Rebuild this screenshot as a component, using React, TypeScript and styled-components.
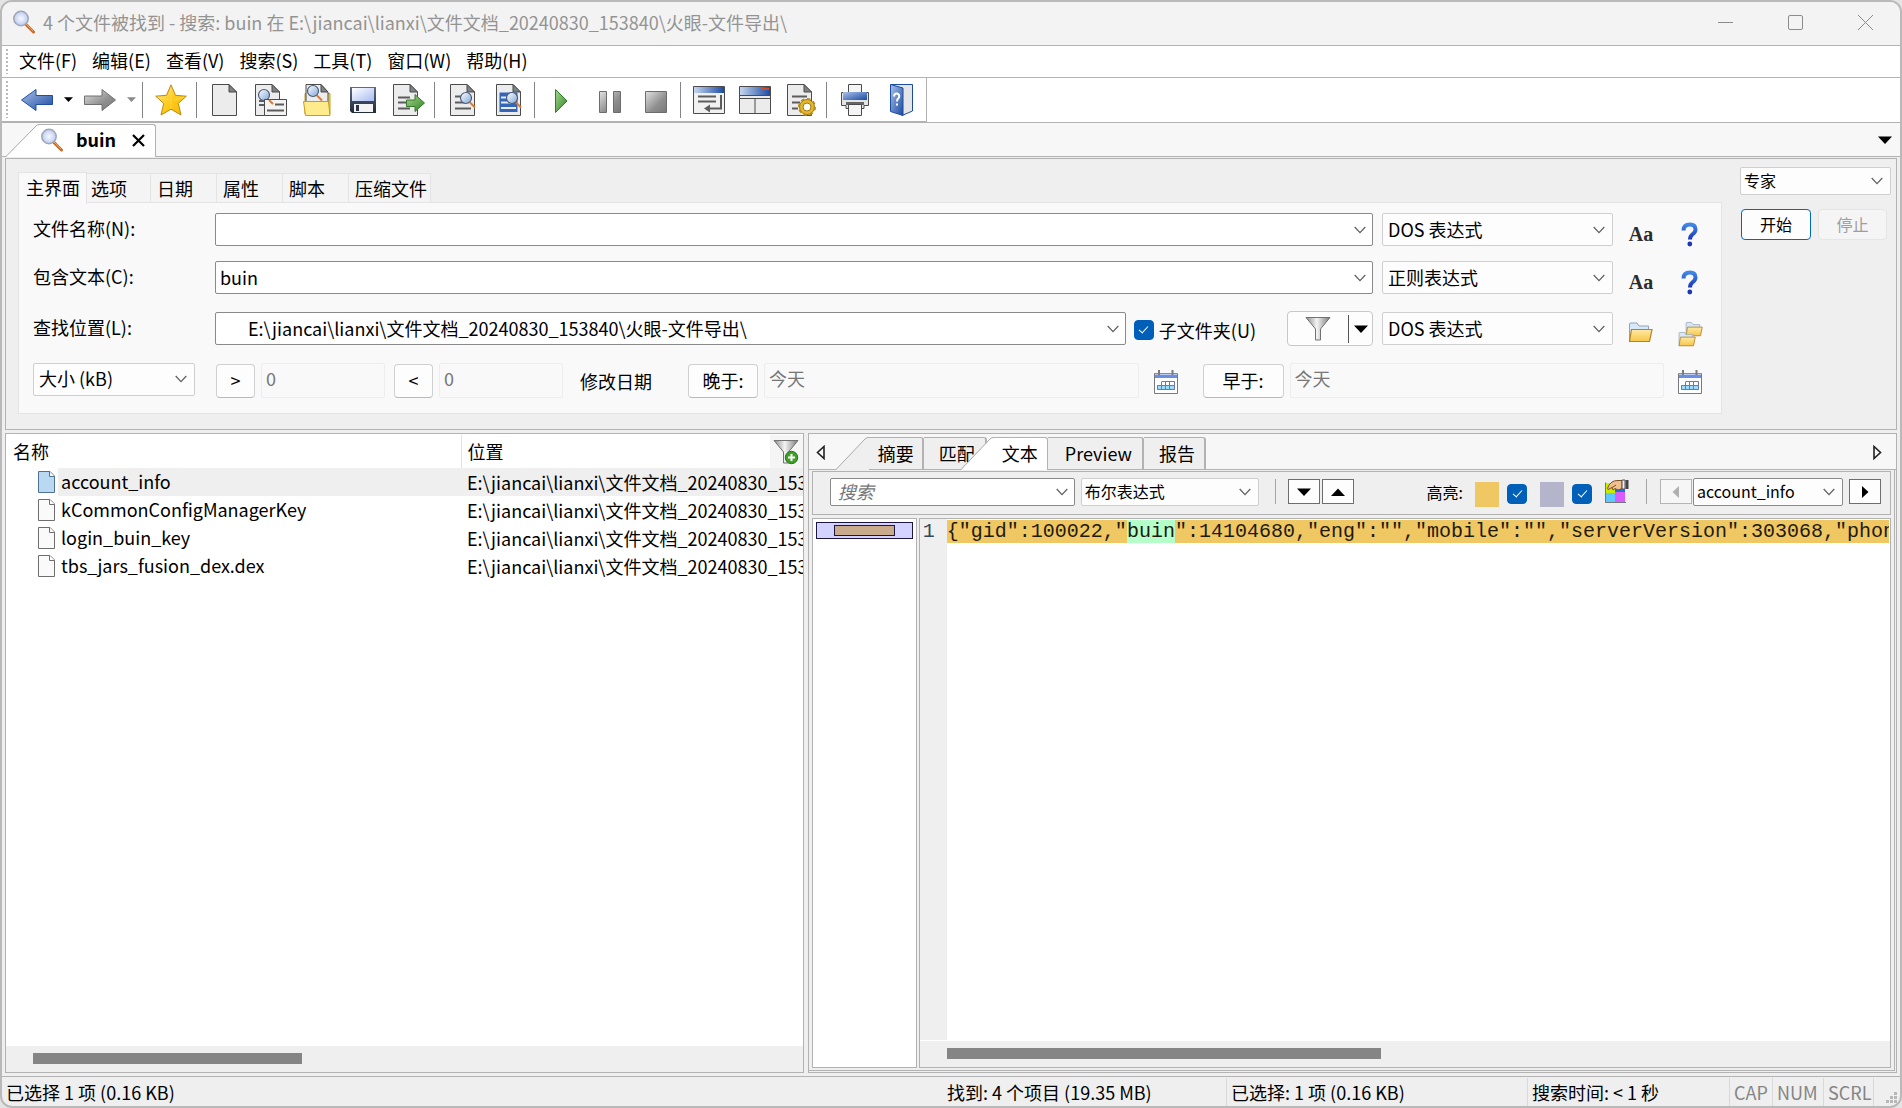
import React, { useState } from "react";
import styled, { createGlobalStyle, css } from "styled-components";

const LINE = "#b2b2b2";
const UI_FONT = `"Noto Sans CJK SC", "Noto Sans", sans-serif`;

const GlobalStyle = createGlobalStyle`
  *, *::before, *::after { box-sizing: border-box; }
  body { margin: 0; background: #e4e4e4; }
  body, button, input, select { font-family: ${UI_FONT}; font-size: 18px; color: #000; }
  button, input, select { margin: 0; padding: 0; border-radius: 0; }
  svg { display: block; flex: none; }
`;

/* ---------- window frame ---------- */

const Window = styled.div`
  display: flex;
  flex-direction: column;
  height: 100vh;
  border: 2px solid #b9b9b9;
  border-radius: 12px;
  overflow: hidden;
  background: #efefef;
  line-height: 24px;
`;

const TitleBar = styled.header`
  display: flex;
  align-items: center;
  height: 44px;
  flex: none;
  padding: 0 0 3px 10px;
  background: #f3f3f3;
  border-bottom: 1px solid ${LINE};
  color: #939393;
`;

const Title = styled.h1`
  flex: 1;
  margin: 0 0 0 7px;
  font-size: 18px;
  font-weight: 400;
  white-space: nowrap;
`;

const CaptionButton = styled.button`
  display: grid;
  place-items: center;
  width: 70px;
  height: 40px;
  border: 0;
  background: none;
`;

const Grip = styled.span`
  width: 2px;
  align-self: stretch;
  margin: 3px 0 3px 4px;
  background: repeating-linear-gradient(#bbb 0 2px, transparent 2px 4px);
`;

const MenuBar = styled.nav`
  display: flex;
  align-items: center;
  height: 32px;
  flex: none;
  background: #fff;
  border-bottom: 1px solid ${LINE};
`;

const MenuButton = styled.button`
  height: 28px;
  padding: 0 8px 3px 7px;
  border: 0;
  background: none;
  line-height: 24px;
  white-space: nowrap;
  &:first-of-type { margin-left: 4px; }
`;

const ToolRow = styled.div`
  display: flex;
  height: 45px;
  flex: none;
  background: #fff;
  border-bottom: 1px solid ${LINE};
`;

const ToolBar = styled.div`
  display: flex;
  align-items: center;
  padding-right: 2px;
  border-right: 1px solid ${LINE};
  border-bottom: 1px solid ${LINE};
`;

const ToolButton = styled.button<{ $narrow?: boolean }>`
  display: grid;
  place-items: center;
  width: ${(p) => (p.$narrow ? 17 : 46)}px;
  height: 40px;
  border: 0;
  background: none;
`;

const ToolStart = styled.div`
  width: 6px;
`;

const ToolSeparator = styled.span`
  width: 1px;
  height: 36px;
  margin: 0 5px 0 2px;
  background: #858585;
`;

/* ---------- document tab ---------- */

const TabStrip = styled.div`
  display: flex;
  align-items: flex-end;
  justify-content: space-between;
  height: 34px;
  flex: none;
  padding: 0 3px 0 4px;
  background: #f7f7f7;
  border-bottom: 1px solid ${LINE};
`;

const SlantTab = styled.div<{ $active?: boolean; $overlap?: boolean }>`
  display: flex;
  position: relative;
  height: 33px;
  margin-bottom: -1px;
  z-index: ${(p) => (p.$active ? 1 : 0)};
  margin-left: ${(p) => (p.$overlap ? -26 : 0)}px;
`;

const DocTabBody = styled.div`
  display: flex;
  align-items: center;
  padding-right: 7px;
  padding-bottom: 2px;
  border-top: 1px solid ${LINE};
  border-right: 1px solid ${LINE};
  border-radius: 0 3px 0 0;
  background: #fff;
`;

const DocTitle = styled.span`
  margin: 0 12px 3px;
  font-size: 18px;
  font-weight: 700;
`;

const IconButton = styled.button<{ $w?: number; $h?: number; $low?: boolean }>`
  display: grid;
  place-items: center;
  width: ${(p) => p.$w ?? 24}px;
  height: ${(p) => p.$h ?? 24}px;
  margin-top: ${(p) => (p.$low ? 8 : 0)}px;
  flex: none;
  border: 0;
  background: none;
`;

/* ---------- search form ---------- */

const SearchPanel = styled.section`
  display: flex;
  flex: none;
  gap: 18px;
  margin: 1px 3px 0 3px;
  padding: 8px 5px 15px 12px;
  border: 1px solid ${LINE};
`;

const FormArea = styled.div`
  flex: 1;
  min-width: 0;
  padding-top: 5px;
`;

const FormTabs = styled.div`
  display: flex;
  align-items: flex-end;
`;

const FormTab = styled.button<{ $active?: boolean }>`
  height: 30px;
  min-width: 66px;
  padding: 0 3px 0 6px;
  border: 1px solid #e4e4e4;
  border-left: 0;
  background: #f4f4f4;
  line-height: 26px;
  text-align: left;
  white-space: nowrap;
  ${(p) =>
    p.$active &&
    css`
      position: relative;
      height: 32px;
      margin-bottom: -1px;
      padding: 0 6px 3px 7px;
      border-left: 1px solid #e4e4e4;
      border-bottom: 0;
      background: #f9f9f9;
      & + button { min-width: 64px; padding-left: 4px; }
    `}
`;

const FormPage = styled.div`
  display: flex;
  flex-direction: column;
  padding: 9px 19px 15px 14px;
  border: 1px solid #e4e4e4;
  margin-top: -1px;
  background: #f9f9f9;
`;

const FormRow = styled.div<{ $gap?: number }>`
  display: flex;
  align-items: center;
  height: 35px;
  margin-bottom: ${(p) => p.$gap ?? 0}px;
`;

const RowLabel = styled.label`
  width: 182px;
  flex: none;
  padding-bottom: 4px;
  white-space: nowrap;
`;

const ComboBox = styled.span<{ $small?: boolean; $width?: number }>`
  display: flex;
  align-items: center;
  flex: ${(p) => (p.$width ? "none" : 1)};
  min-width: 0;
  ${(p) => p.$width && `width: ${p.$width}px;`}
  height: ${(p) => (p.$small ? 28 : 33)}px;
  border: 1px solid #8a8a8a;
  border-radius: 2px;
  background: #fff;
`;

const ComboInput = styled.input<{ $indent?: boolean; $small?: boolean }>`
  flex: 1;
  min-width: 0;
  height: 100%;
  padding: 0 0 2px ${(p) => (p.$indent ? 32 : p.$small ? 7 : 4)}px;
  border: 0;
  outline: 0;
  background: none;
  &::placeholder { color: #767676; font-style: italic; opacity: 1; }
`;

const SelectBox = styled.span<{ $width: number; $small?: boolean; $dark?: boolean; $raised?: boolean }>`
  display: grid;
  align-items: center;
  width: ${(p) => p.$width}px;
  height: ${(p) => (p.$small ? 28 : 33)}px;
  margin-bottom: ${(p) => (p.$raised ? 3 : 0)}px;
  flex: none;
  border: 1px solid ${(p) => (p.$dark ? "#8a8a8a" : "#cfcfcf")};
  border-radius: 2px;
  background: #fdfdfd;
  & > select, & > svg { grid-area: 1 / 1; }
  & > svg { justify-self: end; margin-right: 7px; pointer-events: none; }
  & > select {
    appearance: none;
    width: 100%;
    height: 100%;
    padding: 0 24px 2px ${(p) => (p.$small ? 3 : 5)}px;
    border: 0;
    outline: 0;
    background: none;
    font-size: ${(p) => (p.$small ? 16 : 18)}px;
  }
`;

const PushButton = styled.button<{ $width: number; $primary?: boolean; $small?: boolean }>`
  width: ${(p) => p.$width}px;
  height: ${(p) => (p.$small ? 31 : 34)}px;
  flex: none;
  padding-bottom: 2px;
  border: 1px solid ${(p) => (p.$primary ? "#0067c0" : "#d0d0d0")};
  border-bottom-color: ${(p) => (p.$primary ? "#0067c0" : "#b8b8b8")};
  border-radius: 4px;
  background: #fdfdfd;
  font-size: ${(p) => (p.$small ? 16 : 18)}px;
  white-space: nowrap;
  &:disabled { color: #9d9d9d; background: #f5f5f5; border-color: #e5e5e5; }
`;

const GhostInput = styled.input<{ $width?: number }>`
  ${(p) => (p.$width ? `width: ${p.$width}px; flex: none;` : "flex: 1; min-width: 0; width: 0;")}
  height: 35px;
  padding: 0 4px 6px;
  border: 1px solid #ededed;
  border-radius: 2px;
  background: #f9f9f9;
  color: #767676;
  &::placeholder { color: #767676; opacity: 1; }
`;

const Space = styled.span<{ $w: number }>`
  width: ${(p) => p.$w}px;
  flex: none;
`;

const CheckLabel = styled.label`
  display: flex;
  align-items: center;
  gap: 5px;
  margin-top: 2px;
  white-space: nowrap;
`;

const CheckBox = styled.input.attrs({ type: "checkbox" })`
  appearance: none;
  width: 20px;
  height: 20px;
  flex: none;
  border: 1px solid #005fb8;
  border-radius: 4px;
  background: #fff;
  display: grid;
  place-items: center;
  &:checked { background: #005fb8; }
  &:checked::after {
    content: "";
    width: 5px;
    height: 9px;
    margin-top: -3px;
    border: solid #fff;
    border-width: 0 1px 1px 0;
    transform: rotate(42deg);
  }
`;

const SplitButton = styled.span`
  display: flex;
  align-items: center;
  width: 86px;
  height: 35px;
  flex: none;
  border: 1px solid #c8c8c8;
  border-radius: 4px;
  background: #fdfdfd;
  & > button:last-child { border-left: 1px solid #555; }
`;

const SideArea = styled.div`
  display: flex;
  flex-direction: column;
  gap: 14px;
  width: 151px;
  flex: none;
`;

const SideButtons = styled.div`
  display: flex;
  justify-content: space-between;
  padding: 0 4px 0 1px;
`;

const FieldText = styled.span`
  white-space: nowrap;
`;

/* ---------- results ---------- */

const Workspace = styled.main`
  display: grid;
  grid-template-columns: minmax(0, 798fr) minmax(0, 1088fr);
  gap: 4px;
  flex: 1;
  min-height: 0;
  margin: 3px 3px 3px 3px;
`;

const ListPanel = styled.section`
  display: flex;
  flex-direction: column;
  min-width: 0;
  border: 1px solid ${LINE};
  background: #fff;
`;

const ListScroll = styled.div`
  flex: 1;
  min-height: 0;
  overflow: hidden;
  padding: 1px 0 0 1px;
`;

const FileTable = styled.table`
  width: 100%;
  table-layout: fixed;
  border-collapse: collapse;
  th { height: 33px; padding: 0 0 2px 6px; font-weight: 400; text-align: left; }
  th + th { border-left: 1px solid #e2e2e2; }
  th:last-child { padding: 0 0 0 3px; border-left: 0; background: #f5f5f5; }
  td { height: 28px; padding: 0 0 0 6px; overflow: hidden; white-space: nowrap; }
  td:first-child { padding: 0; }
`;

const FileName = styled.span<{ $selected?: boolean }>`
  display: flex;
  align-items: center;
  padding-left: 31px;
  & > span {
    flex: 1;
    height: 28px;
    margin-left: 2px;
    padding-left: 3px;
    line-height: 27px;
    background: ${(p) => (p.$selected ? "#efefef" : "none")};
  }
`;

const FileRow = styled.tr<{ $selected?: boolean }>`
  td:last-child { background: ${(p) => (p.$selected ? "#efefef" : "none")}; }
`;

const ScrollTrack = styled.div<{ $inset: number }>`
  flex: none;
  height: 26px;
  padding: 7px 0 0 ${(p) => p.$inset}px;
  background: #efefef;
`;

const ScrollThumb = styled.div<{ $share: number }>`
  width: ${(p) => p.$share}%;
  height: 11px;
  background: #858585;
`;

/* ---------- viewer ---------- */

const ViewPanel = styled.section`
  display: flex;
  flex-direction: column;
  min-width: 0;
  padding-right: 1px;
  padding-bottom: 1px;
  border: 1px solid ${LINE};
`;

const ViewTabs = styled.div`
  display: flex;
  align-items: flex-end;
  height: 36px;
  flex: none;
  margin-right: -1px;
  padding: 0 9px 0 2px;
  background: #f7f7f7;
  border-bottom: 1px solid ${LINE};
`;

const ViewTab = styled.button<{ $active?: boolean; $lead: number; $tail: number }>`
  height: 33px;
  padding: 0 ${(p) => p.$tail}px 2px ${(p) => p.$lead}px;
  border: solid ${LINE};
  border-width: 1px ${(p) => (p.$active ? 1 : 2)}px ${(p) => (p.$active ? 0 : 1)}px 0;
  border-radius: 0 3px 0 0;
  background: ${(p) => (p.$active ? "#fff" : "#efefef")};
  white-space: nowrap;
`;

const Grow = styled.span`
  flex: 1;
`;

const ViewBody = styled.div`
  display: flex;
  flex-direction: column;
  flex: 1;
  min-height: 0;
  padding: 1px 3px 2px 3px;
  border-right: 1px solid ${LINE};
  border-bottom: 1px solid ${LINE};
`;

const ViewTools = styled.div`
  display: flex;
  align-items: center;
  height: 44px;
  flex: none;
  padding: 0 9px 3px 17px;
  border: 1px solid ${LINE};
  font-size: 16px;
`;

const StepButton = styled.button`
  display: grid;
  place-items: center;
  width: 32px;
  height: 25px;
  flex: none;
  border: 1px solid #6e6e6e;
  background: #fdfdfd;
  &:disabled { border-color: #b4b4b4; background: #f6f6f6; }
`;

const Divider = styled.span`
  width: 1px;
  height: 25px;
  flex: none;
  background: #a6a6a6;
`;

const Swatch = styled.span<{ $color: string }>`
  width: 24px;
  height: 25px;
  flex: none;
  margin-top: 5px;
  background: ${(p) => p.$color};
`;

const CheckSlot = styled.span`
  display: block;
  margin-top: 5px;
`;

const ViewContent = styled.div`
  display: flex;
  gap: 2px;
  flex: 1;
  min-height: 0;
  margin-top: 3px;
`;

const MiniMap = styled.div`
  width: 105px;
  flex: none;
  padding: 3px;
  border: 1px solid ${LINE};
  background: #fff;
`;

const MapBar = styled.div`
  height: 17px;
  padding: 2px 17px;
  border: 1px solid #1b1740;
  background: #d4d3ff;
`;

const MapMark = styled.div`
  height: 11px;
  border: 1px solid #1b1740;
  background: #c9ab8c;
`;

const Editor = styled.div`
  display: flex;
  flex-direction: column;
  flex: 1;
  min-width: 0;
  border: 1px solid ${LINE};
  background: #fff;
`;

const EditorLines = styled.div`
  display: flex;
  flex: 1;
  min-height: 0;
  padding-right: 1px;
  font-family: "Liberation Mono", monospace;
  font-size: 20px;
  line-height: 23px;
  border-bottom: 1px solid #fff;
`;

const Gutter = styled.div`
  width: 27px;
  flex: none;
  padding: 1px 0 0 3px;
  background: #efefef;
  color: #34495a;
`;

const CodeLine = styled.pre`
  flex: 1;
  min-width: 0;
  height: 23px;
  margin: 1px 0 0;
  overflow: hidden;
  background: #efc863;
  font: inherit;
  color: #1f1a0e;
`;

const Hit = styled.mark`
  background: #b5ffc8;
  color: inherit;
`;

/* ---------- status bar ---------- */

const StatusBar = styled.footer`
  display: flex;
  flex: none;
  height: 30px;
  border-top: 1px solid ${LINE};
  line-height: 28px;
  white-space: nowrap;
`;

const StatusCell = styled.span<{ $width?: number; $muted?: boolean; $bare?: boolean }>`
  ${(p) => (p.$width ? `width: ${p.$width}px; flex: none;` : "flex: 1;")}
  margin-top: 1px;
  padding-left: 4px;
  border-right: ${(p) => (p.$bare ? "0" : "1px solid #d9d9d9")};
  color: ${(p) => (p.$muted ? "#858585" : "#000")};
`;

const SizeGrip = styled.span`
  display: flex;
  align-items: flex-end;
  width: 26px;
  padding: 0 0 2px 12px;
`;

/* ---------- icons ---------- */

const DefsSvg = styled.svg`
  position: absolute;
`;

const Defs = () => (
  <DefsSvg width="0" height="0" aria-hidden="true">
    <defs>
      <linearGradient id="blue" x1="0" y1="0" x2="1" y2="1"><stop offset="0" stopColor="#a9c1ea" /><stop offset="1" stopColor="#1a4a9f" /></linearGradient>
      <linearGradient id="blueH" x1="0" y1="0" x2="1" y2="0"><stop offset="0" stopColor="#c6d6f0" /><stop offset="1" stopColor="#1c4ca2" /></linearGradient>
      <linearGradient id="grey" x1="0" y1="0" x2="1" y2="1"><stop offset="0" stopColor="#e2e2e2" /><stop offset=".6" stopColor="#8f8f8f" /><stop offset="1" stopColor="#787878" /></linearGradient>
      <linearGradient id="green" x1="0" y1="0" x2="1" y2="1"><stop offset="0" stopColor="#a5d88f" /><stop offset="1" stopColor="#2f8322" /></linearGradient>
      <linearGradient id="gold" x1="0" y1="0" x2="1" y2="1"><stop offset="0" stopColor="#ffe98f" /><stop offset=".5" stopColor="#ffcc1c" /><stop offset="1" stopColor="#f5b400" /></linearGradient>
      <linearGradient id="fold" x1="0" y1="0" x2="0" y2="1"><stop offset="0" stopColor="#ffe9a6" /><stop offset="1" stopColor="#f8c547" /></linearGradient>
      <linearGradient id="metal" x1="0" y1="0" x2="1" y2="0"><stop offset="0" stopColor="#8a8a8a" /><stop offset=".45" stopColor="#f4f4f4" /><stop offset="1" stopColor="#7a7a7a" /></linearGradient>
      <linearGradient id="quest" x1="0" y1="0" x2="0" y2="1"><stop offset="0" stopColor="#3f86e6" /><stop offset="1" stopColor="#1c37b5" /></linearGradient>
      <radialGradient id="lens"><stop offset="0" stopColor="#f7faff" /><stop offset="1" stopColor="#bccbf2" /></radialGradient>
      <linearGradient id="lens2" x1="0" y1="0" x2="1" y2="1"><stop offset="0" stopColor="#fff" /><stop offset="1" stopColor="#7fa6d8" /></linearGradient>
      <linearGradient id="disk" x1="0" y1="0" x2="1" y2="1"><stop offset="0" stopColor="#fff" /><stop offset="1" stopColor="#a9bdf2" /></linearGradient>
      <linearGradient id="diskEdge" x1="0" y1="0" x2="0" y2="1"><stop offset="0" stopColor="#5d6c8c" /><stop offset="1" stopColor="#232a38" /></linearGradient>
    </defs>
  </DefsSvg>
);

const Magnifier = () => (
  <svg width="24" height="24" viewBox="0 0 24 24">
    <path d="M14 14.500L21.500 22" stroke="#c8682a" strokeWidth="3" strokeLinecap="round" />
    <path d="M14 14L21 21" stroke="#eda15e" strokeWidth="1" strokeLinecap="round" />
    <circle cx="9" cy="8.500" r="7.200" fill="url(#lens)" stroke="#9fa6b5" strokeWidth="1.500" />
  </svg>
);

const Icon = ({ children }: { children: React.ReactNode }) => (
  <svg width="32" height="32" viewBox="0 0 32 32" fill="none">{children}</svg>
);

const Sheet = ({ x = 3 }: { x?: number }) => (
  <g transform={`translate(${x} 0)`}>
    <path d="M.5.500H17L24.500 8V31.500H.5Z" fill="#ececec" stroke="#4b4b4b" />
    <path d="M17 .500V8H24.500Z" fill="#7d8287" stroke="#4b4b4b" />
  </g>
);

const Glass = ({ x, y }: { x: number; y: number }) => (
  <g transform={`translate(${x} ${y})`}>
    <path d="M4 4.500L9 9.500" stroke="#db7a33" strokeWidth="2" />
    <circle r="5.500" fill="url(#lens2)" stroke="#4a5b78" strokeWidth="1.200" />
  </g>
);

const BackIcon = () => <Icon><path d="M.5 16L15 5.500V11.500H31.500V20.500H15V26.500Z" fill="url(#blue)" stroke="#1f4fa5" /></Icon>;
const ForwardIcon = () => <Icon><path d="M31.500 16L18 5.500V12H.5V20.500H18V26.500Z" fill="url(#grey)" stroke="#707070" /></Icon>;
const StarIcon = () => <Icon><path d="M16 .8L20.500 11.300L31.300 12.200L23.300 19.400L26 31L16 25.200L6 31L8.700 19.400L.7 12.200L11.500 11.300Z" fill="url(#gold)" stroke="#b98a14" /><path d="M16 4V25M3 13L13 16M29 13L19 16" stroke="#ffe070" strokeWidth="1" opacity=".6" /></Icon>;
const NewIcon = () => <Icon><Sheet /></Icon>;
const DocSearchIcon = () => (
  <Icon><Sheet x={0} /><path d="M4 17H12M4 21H10" stroke="#5c5c5c" strokeWidth="2" /><Glass x={9} y={11} /><path d="M9.500 15.500H31.500V31.500H9.500Z" fill="#f3f3f3" stroke="#4b4b4b" /><path d="M14 16L18 20" stroke="#db7a33" strokeWidth="2" /><path d="M20 20.500H29M12 26.500H29" stroke="#5c5c5c" strokeWidth="2" /></Icon>
);
const FolderSearchIcon = () => (
  <Icon><path d="M4 9.500H29V30H4Z" fill="#f5d95e" stroke="#c79d1d" /><path d="M5 .500H20L27 8V20H5Z" fill="#ececec" stroke="#4b4b4b" /><path d="M20 .500V8H27Z" fill="#7d8287" stroke="#4b4b4b" /><Glass x={12} y={7} /><path d="M2.500 17.500H27.500L29 31.500H4.500Z" fill="#fdeb8c" stroke="#c79d1d" /></Icon>
);
const SaveIcon = () => (
  <Icon><path d="M3 3H29V29H5L3 27Z" fill="url(#diskEdge)" /><path d="M5 4H27V17H5Z" fill="url(#disk)" /><path d="M7 20H26V28H7Z" fill="#f4f4f4" /><path d="M9 21H12V27H9Z" fill="#2c3445" /></Icon>
);
const ExportIcon = () => (
  <Icon><Sheet x={0} /><path d="M5 13.500H17M5 18.500H14M5 24.500H17" stroke="#5c5c5c" strokeWidth="2" /><path d="M13.500 16H22V10.500L31.500 19L22 27.500V22.500H13.500Z" fill="url(#green)" stroke="#38762e" /></Icon>
);
const FindDocIcon = () => (
  <Icon><Sheet /><path d="M8 12.500H20M8 18.500H18M8 24.500H24" stroke="#5c5c5c" strokeWidth="2" /><Glass x={19} y={14} /></Icon>
);
const FindBlueIcon = () => (
  <Icon><Sheet /><path d="M6.500 8.500H24.500V28H6.500Z" fill="#3565b7" /><path d="M8 13.500H20M8 18.500H18M8 24H23" stroke="#e6edf9" strokeWidth="2" /><Glass x={19} y={14} /></Icon>
);
const PlayIcon = () => <Icon><path d="M8.500 5.500L20 17L8.500 28.500Z" fill="url(#green)" stroke="#2f7d25" /></Icon>;
const PauseIcon = () => <Icon><path d="M6.500 7.500H13.500V28.500H6.500ZM20.500 7.500H27.500V28.500H20.500Z" fill="url(#grey)" stroke="#6c6c6c" /></Icon>;
const StopIcon = () => <Icon><path d="M6.500 7.500H27.500V28.500H6.500Z" fill="url(#grey)" stroke="#6c6c6c" /></Icon>;
const WrapIcon = () => (
  <Icon><path d="M.5 2.500H31.500V29.500H.5Z" fill="#f1f1f1" stroke="#4b4b4b" /><path d="M1 3H31V9H1Z" fill="url(#blueH)" /><path d="M5 12.500H23M5 17.500H23M28 11V24.500H16" stroke="#5c5c5c" strokeWidth="2" /><path d="M17 20.500V28.500L11 24.500Z" fill="#5c5c5c" /></Icon>
);
const LayoutIcon = () => (
  <Icon><path d="M.5 2.500H31.500V29.500H.5Z" fill="#ececec" stroke="#4b4b4b" /><path d="M1 3H31V11H1Z" fill="url(#blueH)" /><path d="M22 5H30" stroke="#e04a1d" strokeWidth="2" strokeDasharray="2.500 .5" /><path d="M1 11.500H31M1 14.500H31M16 15V29" stroke="#4b4b4b" /></Icon>
);
const GearDocIcon = () => (
  <Icon><Sheet x={2} /><path d="M7 12.500H22M7 18.500H15M7 24.500H13" stroke="#5c5c5c" strokeWidth="2" /><circle cx="22" cy="23" r="7.500" fill="#e3b62c" stroke="#a57a10" /><circle cx="22" cy="23" r="8.200" stroke="#b78a16" strokeWidth="1.600" strokeDasharray="3.500 2.900" /><circle cx="22" cy="23" r="4" fill="#fff" stroke="#a57a10" /></Icon>
);
const PrinterIcon = () => (
  <Icon><path d="M9.500.500H22.500V9H9.500Z" fill="#f4f4f4" stroke="#4b4b4b" /><path d="M2.500 8.500H29.500V21.500H25V24.500H7V21.500H2.500Z" fill="#e4e4e4" stroke="#4b4b4b" /><path d="M4 8H28V16H4Z" fill="url(#blue)" /><path d="M7 18H25V21H7Z" fill="#666" /><path d="M9.500 20.500H22.500V31.500H9.500Z" fill="#f4f4f4" stroke="#4b4b4b" /></Icon>
);
const HelpIcon = () => (
  <Icon><path d="M6 .500H27.500V27L17 31.500Z" fill="#e5e5e5" stroke="#1b4ca3" /><path d="M5.500.500L18 4V31.500L5.500 27.500Z" fill="url(#blue)" stroke="#1b4ca3" /><path d="M9 12.500Q9.500 9 12 9.500Q15 10.500 14 13.500Q12 15 12 17.500M12 19.500V21.500" stroke="#fff" strokeWidth="2" /></Icon>
);

const Caret = ({ dir = "down", w = 14, color = "#000" }: { dir?: "down" | "up" | "left" | "right"; w?: number; color?: string }) => {
  const paths = { down: "M0 3.500H14L7 11Z", up: "M0 11H14L7 3.500Z", left: "M10 1V13L3.500 7Z", right: "M4 1V13L10.500 7Z" };
  return <svg width={w} height={w} viewBox="0 0 14 14"><path d={paths[dir]} fill={color} /></svg>;
};

const Chevron = () => (
  <svg width="12" height="12" viewBox="0 0 12 12" fill="none"><path d="M.7 3L6 8.700L11.300 3" stroke="#5e5e5e" strokeWidth="1.200" /></svg>
);

const CaseIcon = () => (
  <svg width="26" height="24" viewBox="0 0 26 24">
    <text x="13" y="19" textAnchor="middle" fontFamily="Liberation Serif, serif" fontWeight="700" fontSize="20" fill="#2c2c2c">Aa</text>
  </svg>
);

const QuestionIcon = () => (
  <svg width="24" height="26" viewBox="0 0 24 26" fill="none">
    <path d="M5.500 9.500Q5.500 3.500 12 3.500Q17.500 3.500 17.500 8.500Q17.500 11 14.800 13Q12 15 12 18.500" stroke="url(#quest)" strokeWidth="4" />
    <circle cx="11.800" cy="23" r="2.400" fill="#1c37b5" />
  </svg>
);

const FolderShape = () => (
  <>
    <path d="M1.500 21V3Q1.500 2 2.500 2H9L11 5H20.500V10" fill="#d7e8fa" stroke="#93a3b8" />
    <path d="M3.500 8.500H24L21.500 20.500H1.500Z" fill="url(#fold)" stroke="#b5822a" strokeWidth="1.200" />
  </>
);
const FolderIcon = () => <svg width="25" height="24" viewBox="0 0 25 24" fill="none"><FolderShape /></svg>;
const FoldersIcon = () => (
  <svg width="25" height="26" viewBox="0 0 25 26" fill="none">
    <g transform="translate(7 0) scale(.72)"><FolderShape /></g>
    <g transform="translate(0 10) scale(.72)"><FolderShape /></g>
  </svg>
);

const CalendarIcon = () => (
  <svg width="24" height="26" viewBox="0 0 24 26" fill="none">
    <path d="M.5 4.500H23.500V24.500H.5Z" fill="#fff" stroke="#77797f" />
    <path d="M1 4H23V9H1Z" fill="#6b8fe0" />
    <path d="M1 5H23V6H1Z" fill="#b9cbf4" />
    <path d="M5 1V6M18.500 1V6" stroke="#7b7b7b" strokeWidth="2" />
    <path d="M4 16H20V21H4Z" fill="#9edcff" />
    <path d="M8 12.500H20.500V20.500H3.500V16.500H20.500M7.500 12.500V20.500M11.500 12.500V20.500M15.500 12.500V20.500M20.500 12.500V20.500M3.500 16.500V20.500" stroke="#6b78b5" />
  </svg>
);

const FunnelIcon = ({ plus }: { plus?: boolean }) => (
  <svg width="27" height="26" viewBox="0 0 27 26" fill="none">
    <path d="M1 1.500H25L15.500 13V24H10.500V13Z" fill="url(#metal)" stroke="#727272" />
    {plus && <><circle cx="18.500" cy="18.500" r="6.200" fill="#3fa226" stroke="#257315" /><path d="M18.500 15V22M15 18.500H22" stroke="#fff" strokeWidth="2" /></>}
  </svg>
);

const FileIcon = ({ fill, stroke }: { fill: string; stroke: string }) => (
  <svg width="18" height="22" viewBox="0 0 18 22" fill="none">
    <path d="M.5.500H12L16.500 5V21.500H.5Z" fill={fill} stroke={stroke} />
    <path d="M11.500.500V5.500H16.500" fill="#fff" stroke={stroke} />
  </svg>
);

const PaletteIcon = () => (
  <svg width="25" height="25" viewBox="0 0 25 25" fill="none">
    <path d="M1 4H12V14H1Z" fill="#c6ef00" /><path d="M11 10H21V14H11Z" fill="#1e6fe0" /><path d="M1 14H11V24H1Z" fill="#5cc8ff" /><path d="M11 13H21V24H11Z" fill="#d65cff" />
    <path d="M1.500 3.500V23.500H22" stroke="#777" />
    <path d="M3.500 9.500Q4 6 8 3Q10 1.500 14 1.500H18V9.500L14 11L11 9.500L9 11L8 8.500L4 10.500Z" fill="#f0c08e" stroke="#7b4d22" />
    <path d="M8 8.500L12 6" stroke="#7b4d22" />
    <path d="M18 1H21V10H18Z" fill="#eee" stroke="#555" /><path d="M21.500 1H24.500V10H21.500Z" fill="#444" />
  </svg>
);

const Slant = ({ fill, w = 33 }: { fill: string; w?: number }) => (
  <svg width={w} height="33" viewBox={`0 0 ${w} 33`} fill="none">
    <path d={`M0 33L${w - 4} 2Q${w - 3} .5 ${w} .5V33Z`} fill={fill} />
    <path d={`M0 32.500L${w - 4} 2Q${w - 3} .5 ${w} .5`} stroke="#a9a9a9" />
  </svg>
);

/* ---------- pieces ---------- */

type SelectProps = { label: string; options: string[]; width: number; small?: boolean; dark?: boolean; raised?: boolean };

const Select = ({ label, options, width, small, dark, raised }: SelectProps) => (
  <SelectBox $width={width} $small={small} $dark={dark} $raised={raised}>
    <select aria-label={label}>{options.map((o) => <option key={o}>{o}</option>)}</select>
    <Chevron />
  </SelectBox>
);

const PATH = "E:\\jiancai\\lianxi\\文件文档_20240830_153840\\火眼-文件导出\\";
const MENUS = ["文件(F)", "编辑(E)", "查看(V)", "搜索(S)", "工具(T)", "窗口(W)", "帮助(H)"];
const FILES = ["account_info", "kCommonConfigManagerKey", "login_buin_key", "tbs_jars_fusion_dex.dex"];
const FORM_TABS = ["主界面", "选项", "日期", "属性", "脚本", "压缩文件"];
const TOOLS: { name: string; icon: React.FC }[][] = [
  [{ name: "收藏", icon: StarIcon }],
  [{ name: "新建", icon: NewIcon }, { name: "新建搜索", icon: DocSearchIcon }, { name: "打开", icon: FolderSearchIcon }, { name: "保存", icon: SaveIcon }, { name: "导出", icon: ExportIcon }],
  [{ name: "查找", icon: FindDocIcon }, { name: "查找结果", icon: FindBlueIcon }],
  [{ name: "开始", icon: PlayIcon }, { name: "暂停", icon: PauseIcon }, { name: "停止", icon: StopIcon }],
  [{ name: "换行", icon: WrapIcon }, { name: "布局", icon: LayoutIcon }, { name: "设置", icon: GearDocIcon }],
  [{ name: "打印", icon: PrinterIcon }, { name: "帮助", icon: HelpIcon }],
];

const PatternRow = ({ id, label, value, mode, gap }: { id: string; label: string; value: string; mode: string; gap: number }) => (
  <FormRow $gap={gap}>
    <RowLabel htmlFor={id}>{label}</RowLabel>
    <ComboBox>
      <ComboInput id={id} defaultValue={value} />
      <IconButton aria-label="展开"><Chevron /></IconButton>
    </ComboBox>
    <Space $w={9} />
    <Select label={label + mode} options={[mode]} width={231} />
    <Space $w={15} />
    <IconButton aria-label="区分大小写" $h={26} $low><CaseIcon /></IconButton>
    <Space $w={26} />
    <IconButton aria-label="帮助" $h={26} $low><QuestionIcon /></IconButton>
  </FormRow>
);

export default function App() {
  const [selected, setSelected] = useState(FILES[0]);
  return (
    <>
      <GlobalStyle />
      <Defs />
      <Window>
        <TitleBar>
          <Magnifier />
          <Title>4 个文件被找到 - 搜索: buin 在 {PATH}</Title>
          <CaptionButton aria-label="最小化"><svg width="15" height="15" viewBox="0 0 15 15"><path d="M0 7.500H15" stroke="#8b8b8b" /></svg></CaptionButton>
          <CaptionButton aria-label="最大化"><svg width="15" height="15" viewBox="0 0 15 15"><rect x=".5" y=".5" width="14" height="14" rx="1.500" fill="none" stroke="#8b8b8b" /></svg></CaptionButton>
          <CaptionButton aria-label="关闭"><svg width="15" height="15" viewBox="0 0 15 15"><path d="M0 0L15 15M15 0L0 15" stroke="#8b8b8b" /></svg></CaptionButton>
        </TitleBar>

        <MenuBar>
          <Grip />
          {MENUS.map((m) => <MenuButton key={m}>{m}</MenuButton>)}
        </MenuBar>

        <ToolRow>
          <ToolBar>
            <Grip />
            <ToolStart />
            <ToolButton aria-label="后退"><BackIcon /></ToolButton>
            <ToolButton $narrow aria-label="后退列表"><Caret w={9} /></ToolButton>
            <ToolButton aria-label="前进"><ForwardIcon /></ToolButton>
            <ToolButton $narrow aria-label="前进列表"><Caret w={9} color="#8a8a8a" /></ToolButton>
            {TOOLS.map((group, i) => (
              <React.Fragment key={i}>
                <ToolSeparator />
                {group.map(({ name, icon: Pic }) => <ToolButton key={name} aria-label={name}><Pic /></ToolButton>)}
              </React.Fragment>
            ))}
          </ToolBar>
        </ToolRow>

        <TabStrip>
          <SlantTab $active>
            <Slant fill="#fff" w={34} />
            <DocTabBody>
              <Magnifier />
              <DocTitle>buin</DocTitle>
              <IconButton aria-label="关闭标签" $w={20}>
                <svg width="13" height="13" viewBox="0 0 13 13"><path d="M1 1L12 12M12 1L1 12" stroke="#000" strokeWidth="2.200" /></svg>
              </IconButton>
            </DocTabBody>
          </SlantTab>
          <IconButton aria-label="标签列表" $h={33}><Caret /></IconButton>
        </TabStrip>

        <SearchPanel>
          <FormArea>
            <FormTabs>
              {FORM_TABS.map((t, i) => <FormTab key={t} $active={i === 0}>{t}</FormTab>)}
            </FormTabs>
            <FormPage>
              <PatternRow id="name" label="文件名称(N):" value="" mode="DOS 表达式" gap={13} />
              <PatternRow id="text" label="包含文本(C):" value="buin" mode="正则表达式" gap={16} />
              <FormRow $gap={17}>
                <RowLabel htmlFor="place">查找位置(L):</RowLabel>
                <ComboBox>
                  <ComboInput id="place" defaultValue={PATH} $indent />
                  <IconButton aria-label="展开"><Chevron /></IconButton>
                </ComboBox>
                <Space $w={8} />
                <CheckLabel><CheckBox defaultChecked />子文件夹(U)</CheckLabel>
                <Space $w={31} />
                <SplitButton>
                  <IconButton aria-label="筛选" $w={60} $h={33}><FunnelIcon /></IconButton>
                  <IconButton aria-label="筛选列表" $h={28}><Caret /></IconButton>
                </SplitButton>
                <Space $w={9} />
                <Select label="位置表达式" options={["DOS 表达式"]} width={231} />
                <Space $w={15} />
                <IconButton aria-label="浏览文件夹" $low><FolderIcon /></IconButton>
                <Space $w={26} />
                <IconButton aria-label="浏览多个文件夹" $low><FoldersIcon /></IconButton>
              </FormRow>
              <FormRow>
                <Select label="大小单位" options={["大小 (kB)"]} width={162} raised />
                <Space $w={21} />
                <PushButton $width={39}>&gt;</PushButton>
                <Space $w={6} />
                <GhostInput $width={124} aria-label="大于" placeholder="0" />
                <Space $w={9} />
                <PushButton $width={39}>&lt;</PushButton>
                <Space $w={6} />
                <GhostInput $width={124} aria-label="小于" placeholder="0" />
                <Space $w={17} />
                <FieldText>修改日期</FieldText>
                <Space $w={36} />
                <PushButton $width={70}>晚于:</PushButton>
                <Space $w={6} />
                <GhostInput aria-label="晚于日期" placeholder="今天" />
                <Space $w={15} />
                <IconButton aria-label="选择开始日期"><CalendarIcon /></IconButton>
                <Space $w={25} />
                <PushButton $width={81}>早于:</PushButton>
                <Space $w={6} />
                <GhostInput aria-label="早于日期" placeholder="今天" />
                <Space $w={14} />
                <IconButton aria-label="选择结束日期"><CalendarIcon /></IconButton>
              </FormRow>
            </FormPage>
          </FormArea>
          <SideArea>
            <Select label="模式" options={["专家"]} width={151} small />
            <SideButtons>
              <PushButton $width={70} $primary $small>开始</PushButton>
              <PushButton $width={69} $small disabled>停止</PushButton>
            </SideButtons>
          </SideArea>
        </SearchPanel>

        <Workspace>
          <ListPanel>
            <ListScroll>
              <FileTable>
                <colgroup><col width="454" /><col /><col width="33" /></colgroup>
                <thead>
                  <tr><th>名称</th><th>位置</th><th><IconButton aria-label="筛选结果" $w={27} $h={26}><FunnelIcon plus /></IconButton></th></tr>
                </thead>
                <tbody>
                  {FILES.map((f) => {
                    const on = f === selected;
                    return (
                      <FileRow key={f} $selected={on} onClick={() => setSelected(f)}>
                        <td>
                          <FileName $selected={on}>
                            <FileIcon fill={on ? "#b9d8f2" : "#fafafa"} stroke={on ? "#4f7290" : "#6e6e6e"} />
                            <span>{f}</span>
                          </FileName>
                        </td>
                        <td colSpan={2}>{PATH}</td>
                      </FileRow>
                    );
                  })}
                </tbody>
              </FileTable>
            </ListScroll>
            <ScrollTrack $inset={27}><ScrollThumb $share={35} /></ScrollTrack>
          </ListPanel>

          <ViewPanel>
            <ViewTabs>
              <IconButton aria-label="向左滚动" $w={20} $h={34}>
                <svg width="10" height="15" viewBox="0 0 10 15"><path d="M8 1.500V13.500L1.500 7.500Z" fill="none" stroke="#222" strokeWidth="1.600" /></svg>
              </IconButton>
              <Space $w={5} />
              <SlantTab><Slant fill="#efefef" /><ViewTab $lead={9} $tail={8}>摘要</ViewTab></SlantTab>
              <SlantTab><ViewTab $lead={15} $tail={10}>匹配</ViewTab></SlantTab>
              <SlantTab $active $overlap><Slant fill="#fff" /><ViewTab $active $lead={8} $tail={9}>文本</ViewTab></SlantTab>
              <SlantTab><ViewTab $lead={17} $tail={10}>Preview</ViewTab></SlantTab>
              <SlantTab><ViewTab $lead={15} $tail={9}>报告</ViewTab></SlantTab>
              <Grow />
              <IconButton aria-label="向右滚动" $w={20} $h={34}>
                <svg width="10" height="15" viewBox="0 0 10 15"><path d="M2 1.500V13.500L8.500 7.500Z" fill="none" stroke="#222" strokeWidth="1.600" /></svg>
              </IconButton>
            </ViewTabs>
            <ViewBody>
              <ViewTools>
                <ComboBox $width={245} $small>
                  <ComboInput $small aria-label="搜索文本" placeholder="搜索" />
                  <IconButton aria-label="展开"><Chevron /></IconButton>
                </ComboBox>
                <Space $w={6} />
                <Select label="表达式类型" options={["布尔表达式"]} width={178} small />
                <Space $w={16} />
                <Divider />
                <Space $w={12} />
                <StepButton aria-label="下一个"><Caret /></StepButton>
                <Space $w={2} />
                <StepButton aria-label="上一个"><Caret dir="up" /></StepButton>
                <Grow />
                <FieldText>高亮:</FieldText>
                <Space $w={12} />
                <Swatch $color="#efc863" />
                <Space $w={8} />
                <CheckSlot><CheckBox defaultChecked aria-label="高亮匹配行" /></CheckSlot>
                <Space $w={13} />
                <Swatch $color="#b4b4ca" />
                <Space $w={8} />
                <CheckSlot><CheckBox defaultChecked aria-label="高亮选择" /></CheckSlot>
                <Space $w={12} />
                <IconButton aria-label="颜色" $w={25} $h={25}><PaletteIcon /></IconButton>
                <Space $w={17} />
                <Divider />
                <Space $w={13} />
                <StepButton aria-label="上一个文件" disabled><Caret dir="left" color="#b0b0b0" /></StepButton>
                <Space $w={1} />
                <Select label="当前文件" options={["account_info"]} width={150} small dark />
                <Space $w={6} />
                <StepButton aria-label="下一个文件"><Caret dir="right" /></StepButton>
              </ViewTools>
              <ViewContent>
                <MiniMap><MapBar><MapMark /></MapBar></MiniMap>
                <Editor>
                  <EditorLines>
                    <Gutter>1</Gutter>
                    <CodeLine>{'{"gid":100022,"'}<Hit>buin</Hit>{'":14104680,"eng":"","mobile":"","serverVersion":303068,"phone'}</CodeLine>
                  </EditorLines>
                  <ScrollTrack $inset={27}><ScrollThumb $share={46} /></ScrollTrack>
                </Editor>
              </ViewContent>
            </ViewBody>
          </ViewPanel>
        </Workspace>

        <StatusBar>
          <StatusCell $bare>已选择 1 项 (0.16 KB)</StatusCell>
          <StatusCell $width={284}>找到: 4 个项目 (19.35 MB)</StatusCell>
          <StatusCell $width={301}>已选择: 1 项 (0.16 KB)</StatusCell>
          <StatusCell $width={202}>搜索时间: &lt; 1 秒</StatusCell>
          <StatusCell $width={43} $muted>CAP</StatusCell>
          <StatusCell $width={51} $muted>NUM</StatusCell>
          <StatusCell $width={50} $muted>SCRL</StatusCell>
          <SizeGrip>
            <svg width="12" height="12" viewBox="0 0 12 12"><path d="M8 0h3v3h-3zM8 4h3v3h-3zM4 4h3v3h-3zM8 8h3v3h-3zM4 8h3v3h-3zM0 8h3v3h-3z" fill="#b8b8b8" /></svg>
          </SizeGrip>
        </StatusBar>
      </Window>
    </>
  );
}
